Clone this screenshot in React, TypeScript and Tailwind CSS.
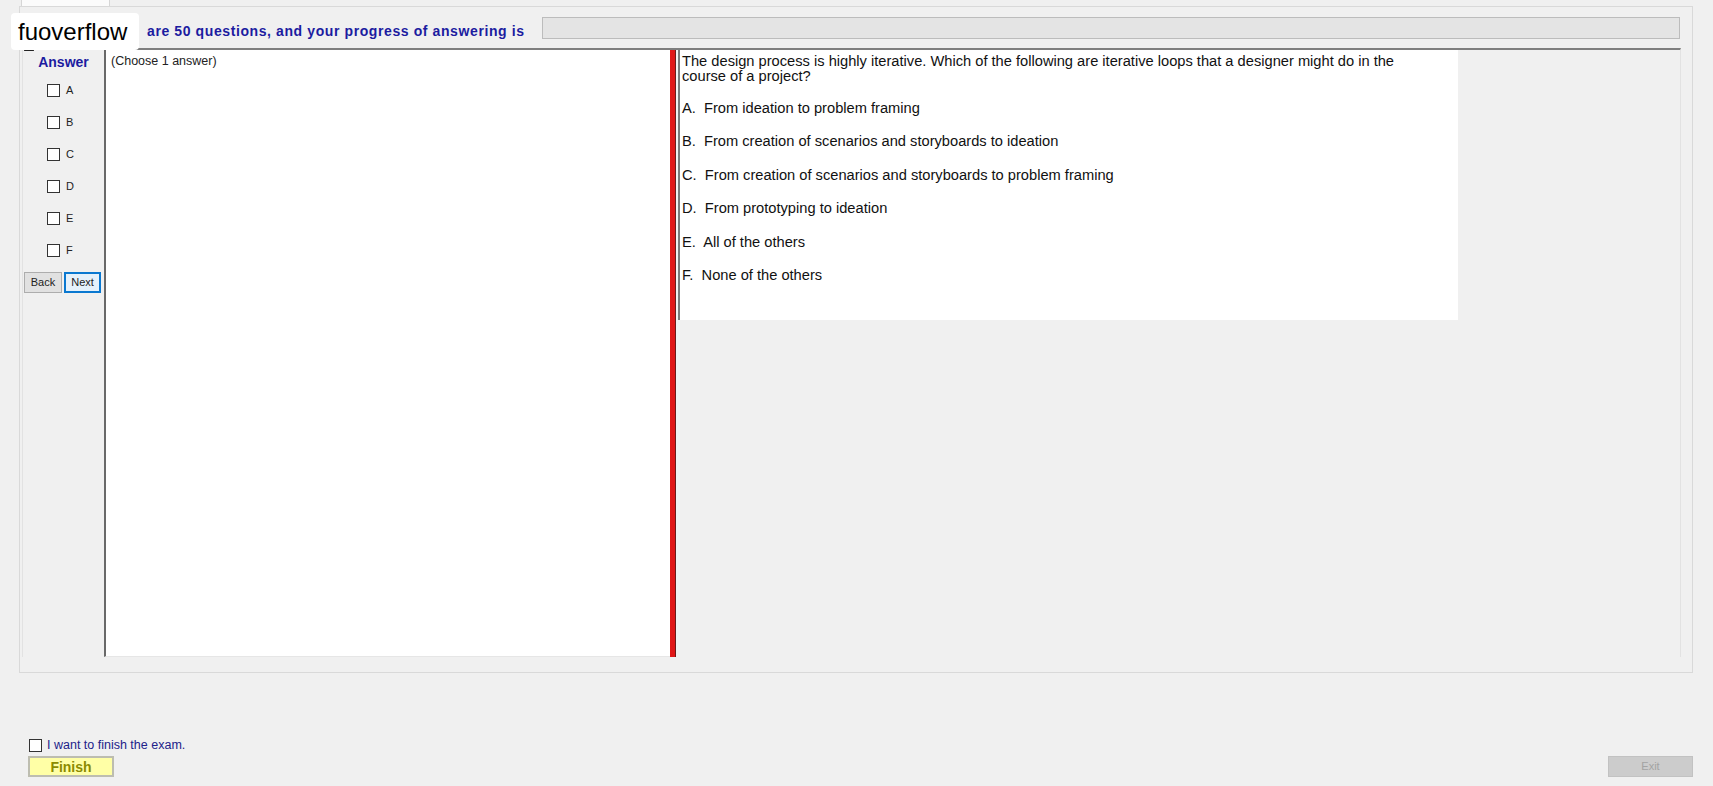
const FONT = { fontFamily: '"Liberation Sans", Arial, sans-serif' };

const answerKeys = ['A', 'B', 'C', 'D', 'E', 'F'];

const options = [
  'A.  From ideation to problem framing',
  'B.  From creation of scenarios and storyboards to ideation',
  'C.  From creation of scenarios and storyboards to problem framing',
  'D.  From prototyping to ideation',
  'E.  All of the others',
  'F.  None of the others',
];

const Box = () => (
  <span className="inline-block h-[13px] w-[13px] shrink-0 border border-[#333333] bg-white" />
);

const AnswerColumn = () => (
  <div className="flex w-[82px] shrink-0 flex-col border-l border-[#e2e2e2] bg-[#f0f0f0]">
    <div className="mt-[4px] text-center text-[14px] font-bold leading-[17px] text-[#1c1ca0]">
      Answer
    </div>
    <div className="mt-[3px] flex flex-col">
      {answerKeys.map((key) => (
        <div key={key} className="flex h-[32px] items-center pl-[24px]">
          <Box />
          <span className="ml-[6px] text-[11px] leading-none text-[#222222]">{key}</span>
        </div>
      ))}
    </div>
    <div className="mt-[6px] flex gap-[2px] pl-[1px]">
      <button className="h-[21px] w-[38px] border border-[#adadad] bg-[#e1e1e1] text-[11px] leading-none text-[#222222]">
        Back
      </button>
      <button className="h-[21px] w-[37px] border-2 border-[#0a78d0] bg-[#e5f1fb] text-[11px] leading-none text-[#222222]">
        Next
      </button>
    </div>
  </div>
);

const QuestionPanel = () => (
  <div className="h-[270px] w-[780px] border-l-2 border-[#7a7a7a] bg-white pl-[2px] pt-[4px] text-[14.67px] leading-[15px] text-[#111111]">
    <div className="whitespace-nowrap">
      The design process is highly iterative. Which of the following are iterative loops that a designer might do in the
      <br />
      course of a project?
    </div>
    <div className="mt-[17px] flex flex-col gap-[18.4px]">
      {options.map((o) => (
        <div key={o} className="whitespace-pre">
          {o}
        </div>
      ))}
    </div>
  </div>
);

export default function App() {
  return (
    <div className="relative h-[786px] w-[1713px] overflow-hidden bg-[#f0f0f0]" style={FONT}>
      {/* tab header */}
      <div className="h-[6px] pl-[21px]">
        <div className="h-full w-[89px] border-x border-[#d6d6d6] bg-[#fbfbfb]" />
      </div>

      {/* tab page */}
      <div className="ml-[19px] flex h-[667px] w-[1674px] flex-col border border-[#d9d9d9] bg-[#f0f0f0]">
        <div className="flex h-[41px] shrink-0 items-start">
          <div className="ml-[127px] mt-[16px] w-[395px] whitespace-nowrap text-[14px] font-bold leading-[17px] tracking-[0.6px] text-[#1c1ca0]">
            are 50 questions, and your progress of answering is
          </div>
          <div className="mt-[10px] h-[22px] w-[1138px] border border-[#bcbcbc] bg-[#e4e4e4]" />
        </div>

        <div className="ml-[2px] flex h-[609px] w-[1659px] shrink-0 border-t-2 border-r border-t-[#7f7f7f] border-r-[#e2e2e2]">
          <AnswerColumn />
          <div className="w-[566px] shrink-0 border-l-2 border-b border-l-[#696969] border-b-[#e6e6e6] bg-white pl-[5px] pt-[4px] text-[12.5px] leading-[15px] text-[#222222]">
            (Choose 1 answer)
          </div>
          <div className="w-[6px] shrink-0 border-r border-[#6a1a1a] bg-[#e01616]" />
          <div className="ml-[2px] flex-1 bg-[#f0f0f0]">
            <QuestionPanel />
          </div>
        </div>
      </div>

      {/* bottom controls */}
      <div className="mt-[66px] flex h-[13px] items-center pl-[29px]">
        <Box />
        <span className="ml-[5px] text-[12.5px] leading-none text-[#22228a]">I want to finish the exam.</span>
      </div>
      <div className="mt-[4px] flex justify-between pl-[28px] pr-[20px]">
        <button className="h-[21px] w-[86px] border-2 border-[#bdbdb0] bg-[#ffffa6] text-[14px] font-bold leading-none text-[#8b8b00]">
          Finish
        </button>
        <button className="h-[21px] w-[85px] border border-[#c2c2c2] bg-[#cccccc] text-[11px] leading-none text-[#a3a3a3]">
          Exit
        </button>
      </div>

      {/* watermark label */}
      <div className="absolute left-[24px] top-[46px] h-[5px] w-[10px] rounded-t-full bg-[#222222]" />
      <div className="absolute left-[11px] top-[13px] flex h-[37px] w-[128px] items-center rounded-sm bg-white pl-[7px] text-[24px] leading-none text-black">
        fuoverflow
      </div>
    </div>
  );
}
